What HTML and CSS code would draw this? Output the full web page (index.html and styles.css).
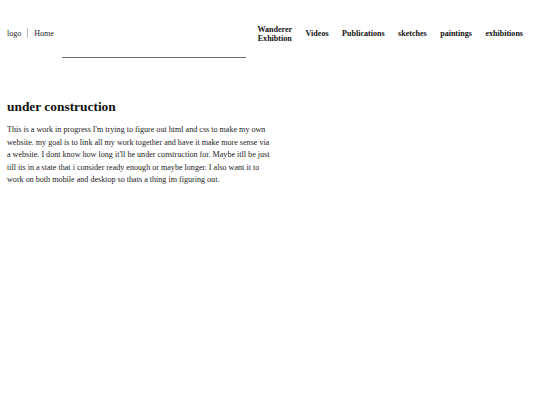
FILE: index.html
```html
<!DOCTYPE html>
<html>
<head>
<meta charset="utf-8">
<link rel="stylesheet" href="styles.css">
</head>
<body>
<header class="header">
  <div class="brand">
    <div class="brand-row">
      <span class="logo">logo</span>
      <span class="sep"></span>
      <span class="home">Home</span>
    </div>
    <div class="rule"></div>
  </div>
  <nav class="nav">
    <a class="nav-item">Wanderer<br>Exhibtion</a>
    <a class="nav-item">Videos</a>
    <a class="nav-item">Publications</a>
    <a class="nav-item">sketches</a>
    <a class="nav-item">paintings</a>
    <a class="nav-item">exhibitions</a>
  </nav>
</header>
<main class="content">
  <h1 class="title">under construction</h1>
  <p class="text">This is a work in progress I'm trying to figure out html and css to make my own website. my goal is to link all my work together and have it make more sense via a website. I dont know how long it'll be under construction for. Maybe itll be just till its in a state that i consider ready enough or maybe longer. I also want it to work on both mobile and desktop so thats a thing im figuring out.</p>
</main>
</body>
</html>
```
FILE: styles.css
```css
html, body {
  margin: 0;
  padding: 0;
  background: #fff;
}
body {
  font-family: "Liberation Serif", "Times New Roman", serif;
  color: #111;
}
.header {
  display: flex;
  justify-content: space-between;
  align-items: flex-start;
  padding: 23px 17px 0 7px;
}
.brand {
  display: flex;
  flex-direction: column;
}
.brand-row {
  display: flex;
  align-items: center;
  font-size: 8px;
  height: 20px;
  color: #222;
}
.sep {
  width: 1px;
  height: 10px;
  background: #bbb;
  margin: 0 6px;
}
.rule {
  margin: 14px 0 0 55px;
  width: 184px;
  height: 1px;
  background: #666;
}
.nav {
  display: flex;
  align-items: center;
  gap: 13.5px;
  height: 20px;
  margin-top: 1px;
}
.nav-item {
  font-weight: bold;
  font-size: 8.05px;
  line-height: 9.5px;
  text-align: center;
  color: #111;
}
.content {
  padding: 41px 7px 0 7px;
}
.title {
  margin: 0 0 9px 0;
  font-size: 13.4px;
  font-weight: bold;
}
.text {
  margin: 0;
  width: 264px;
  font-size: 8.1px;
  line-height: 12.5px;
  color: #222;
}
```
